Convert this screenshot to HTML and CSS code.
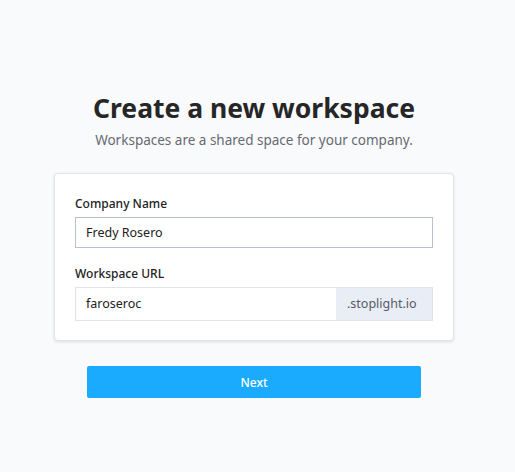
FILE: index.html
```html
<!DOCTYPE html>
<html>
<head>
<meta charset="utf-8">
<link rel="stylesheet" href="styles.css">
</head>
<body>
<main class="page">
  <h1 class="title">Create a new workspace</h1>
  <p class="subtitle">Workspaces are a shared space for your company.</p>
  <section class="card">
    <div class="field">
      <label class="label">Company Name</label>
      <div class="input">Fredy Rosero</div>
    </div>
    <div class="field">
      <label class="label">Workspace URL</label>
      <div class="group">
        <div class="input input-grow">faroseroc</div>
        <div class="addon">.stoplight.io</div>
      </div>
    </div>
  </section>
  <button class="next">Next</button>
</main>
</body>
</html>
```

FILE: styles.css
```css
* { box-sizing: border-box; }
html, body { margin: 0; padding: 0; }
body {
  background: #f9fafc;
  font-family: "Noto Sans", "Open Sans", sans-serif;
  color: #222;
  width: 515px;
  height: 472px;
}
.page {
  display: flex;
  flex-direction: column;
  align-items: center;
  padding-top: 91px;
  padding-right: 7px;
}
.title {
  margin: 0;
  font-size: 26.5px;
  line-height: 34px;
  font-weight: 700;
  color: #262626;
}
.subtitle {
  margin: 5px 0 0;
  font-size: 13.5px;
  line-height: 20px;
  color: #666a70;
}
.card {
  margin-top: 23px;
  width: 400px;
  background: #fff;
  border: 1px solid #dfe3ec;
  border-radius: 4px;
  box-shadow: 0 1px 3px rgba(60, 70, 90, 0.15);
  padding: 21px 20px 19px;
  display: flex;
  flex-direction: column;
  gap: 17px;
}
.field { display: flex; flex-direction: column; }
.label {
  font-size: 12px;
  font-weight: 500;
  line-height: 18px;
  color: #222;
  margin-bottom: 4px;
}
.input {
  height: 31px;
  border: 1px solid #b7c2d1;
  padding: 0 10px;
  font-size: 12.5px;
  line-height: 29px;
  color: #222;
  background: #fff;
}
.group {
  display: flex;
  height: 34px;
  border: 1px solid #dfe3ec;
}
.input-grow {
  flex: 1;
  height: 32px;
  border: none;
  line-height: 32px;
}
.addon {
  width: 96px;
  background: #e9edf5;
  color: #555b66;
  font-size: 12.5px;
  line-height: 32px;
  padding-left: 11px;
}
.next {
  margin-top: 25px;
  width: 334px;
  height: 32px;
  border: none;
  border-radius: 2px;
  background: #1aabff;
  color: #fff;
  font-family: inherit;
  font-size: 12px;
  font-weight: 500;
}
```
